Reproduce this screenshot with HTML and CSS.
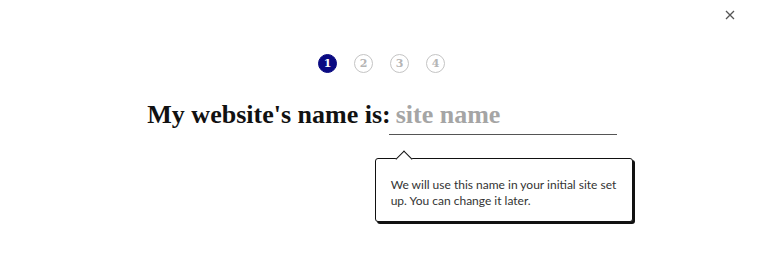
FILE: index.html
```html
<!DOCTYPE html>
<html>
<head>
<meta charset="utf-8">
<link rel="stylesheet" href="styles.css">
</head>
<body>
<div class="page">
  <button class="close" aria-label="Close">
    <svg width="10" height="10" viewBox="0 0 10 10"><path d="M1 1L9 9M9 1L1 9" stroke="#555" stroke-width="1.3" fill="none"/></svg>
  </button>
  <ol class="steps">
    <li class="step active">1</li>
    <li class="step">2</li>
    <li class="step">3</li>
    <li class="step">4</li>
  </ol>
  <div class="question">
    <h1 class="label">My website's name is:</h1>
    <div class="field">
      <input class="input" type="text" placeholder="site name">
      <div class="tip">
        <p>We will use this name in your initial site set up. You can change it later.</p>
      </div>
    </div>
  </div>
</div>
</body>
</html>
```

FILE: styles.css
```css
* { box-sizing: border-box; }
html, body { margin: 0; padding: 0; background: #fff; }
.page {
  position: relative;
  width: 760px;
  height: 261px;
  display: flex;
  flex-direction: column;
  align-items: center;
}
.close {
  position: absolute;
  top: 10px;
  right: 25px;
  width: 10px;
  height: 10px;
  padding: 0;
  border: 0;
  background: none;
  display: flex;
}
.steps {
  list-style: none;
  margin: 54px 0 0 3px;
  padding: 0;
  display: flex;
  gap: 17px;
}
.step {
  width: 19px;
  height: 19px;
  border-radius: 50%;
  border: 1.5px solid #c4c4c4;
  color: #b5b5b5;
  font-family: "DejaVu Serif", "Liberation Serif", serif;
  font-size: 11px;
  font-weight: 700;
  display: flex;
  align-items: center;
  justify-content: center;
}
.step.active {
  background: #0a0a82;
  border-color: #0a0a82;
  color: #fff;
}
.question {
  margin-top: 22px;
  margin-left: 4px;
  display: flex;
  align-items: flex-start;
}
.label {
  margin: 0;
  font-family: "Liberation Serif", serif;
  font-weight: 700;
  font-size: 26px;
  line-height: 40px;
  color: #111;
}
.field {
  position: relative;
  width: 228px;
  margin-left: -2px;
}
.input {
  width: 228px;
  height: 40px;
  margin: 0;
  padding: 0 0 0 7px;
  border: 0;
  border-bottom: 1px solid #555;
  font-family: "Liberation Serif", serif;
  font-weight: 700;
  font-size: 26px;
  outline: none;
  background: transparent;
  color: #111;
}
.input::placeholder { color: #a5a5a5; }
.tip {
  position: absolute;
  left: -14px;
  top: 63px;
  width: 258px;
  height: 64px;
  background: #fff;
  border: 1px solid #111;
  border-radius: 3px;
  box-shadow: 2px 2px 0 #111;
  padding: 18px 15px 0 15px;
}
.tip::before {
  content: "";
  position: absolute;
  top: -6px;
  left: 22px;
  width: 11px;
  height: 11px;
  background: #fff;
  border-left: 1px solid #111;
  border-top: 1px solid #111;
  transform: rotate(45deg);
}
.tip p {
  margin: 0;
  font-family: "Lato", "Noto Sans", sans-serif;
  font-size: 12px;
  line-height: 16px;
  color: #333;
}
```
